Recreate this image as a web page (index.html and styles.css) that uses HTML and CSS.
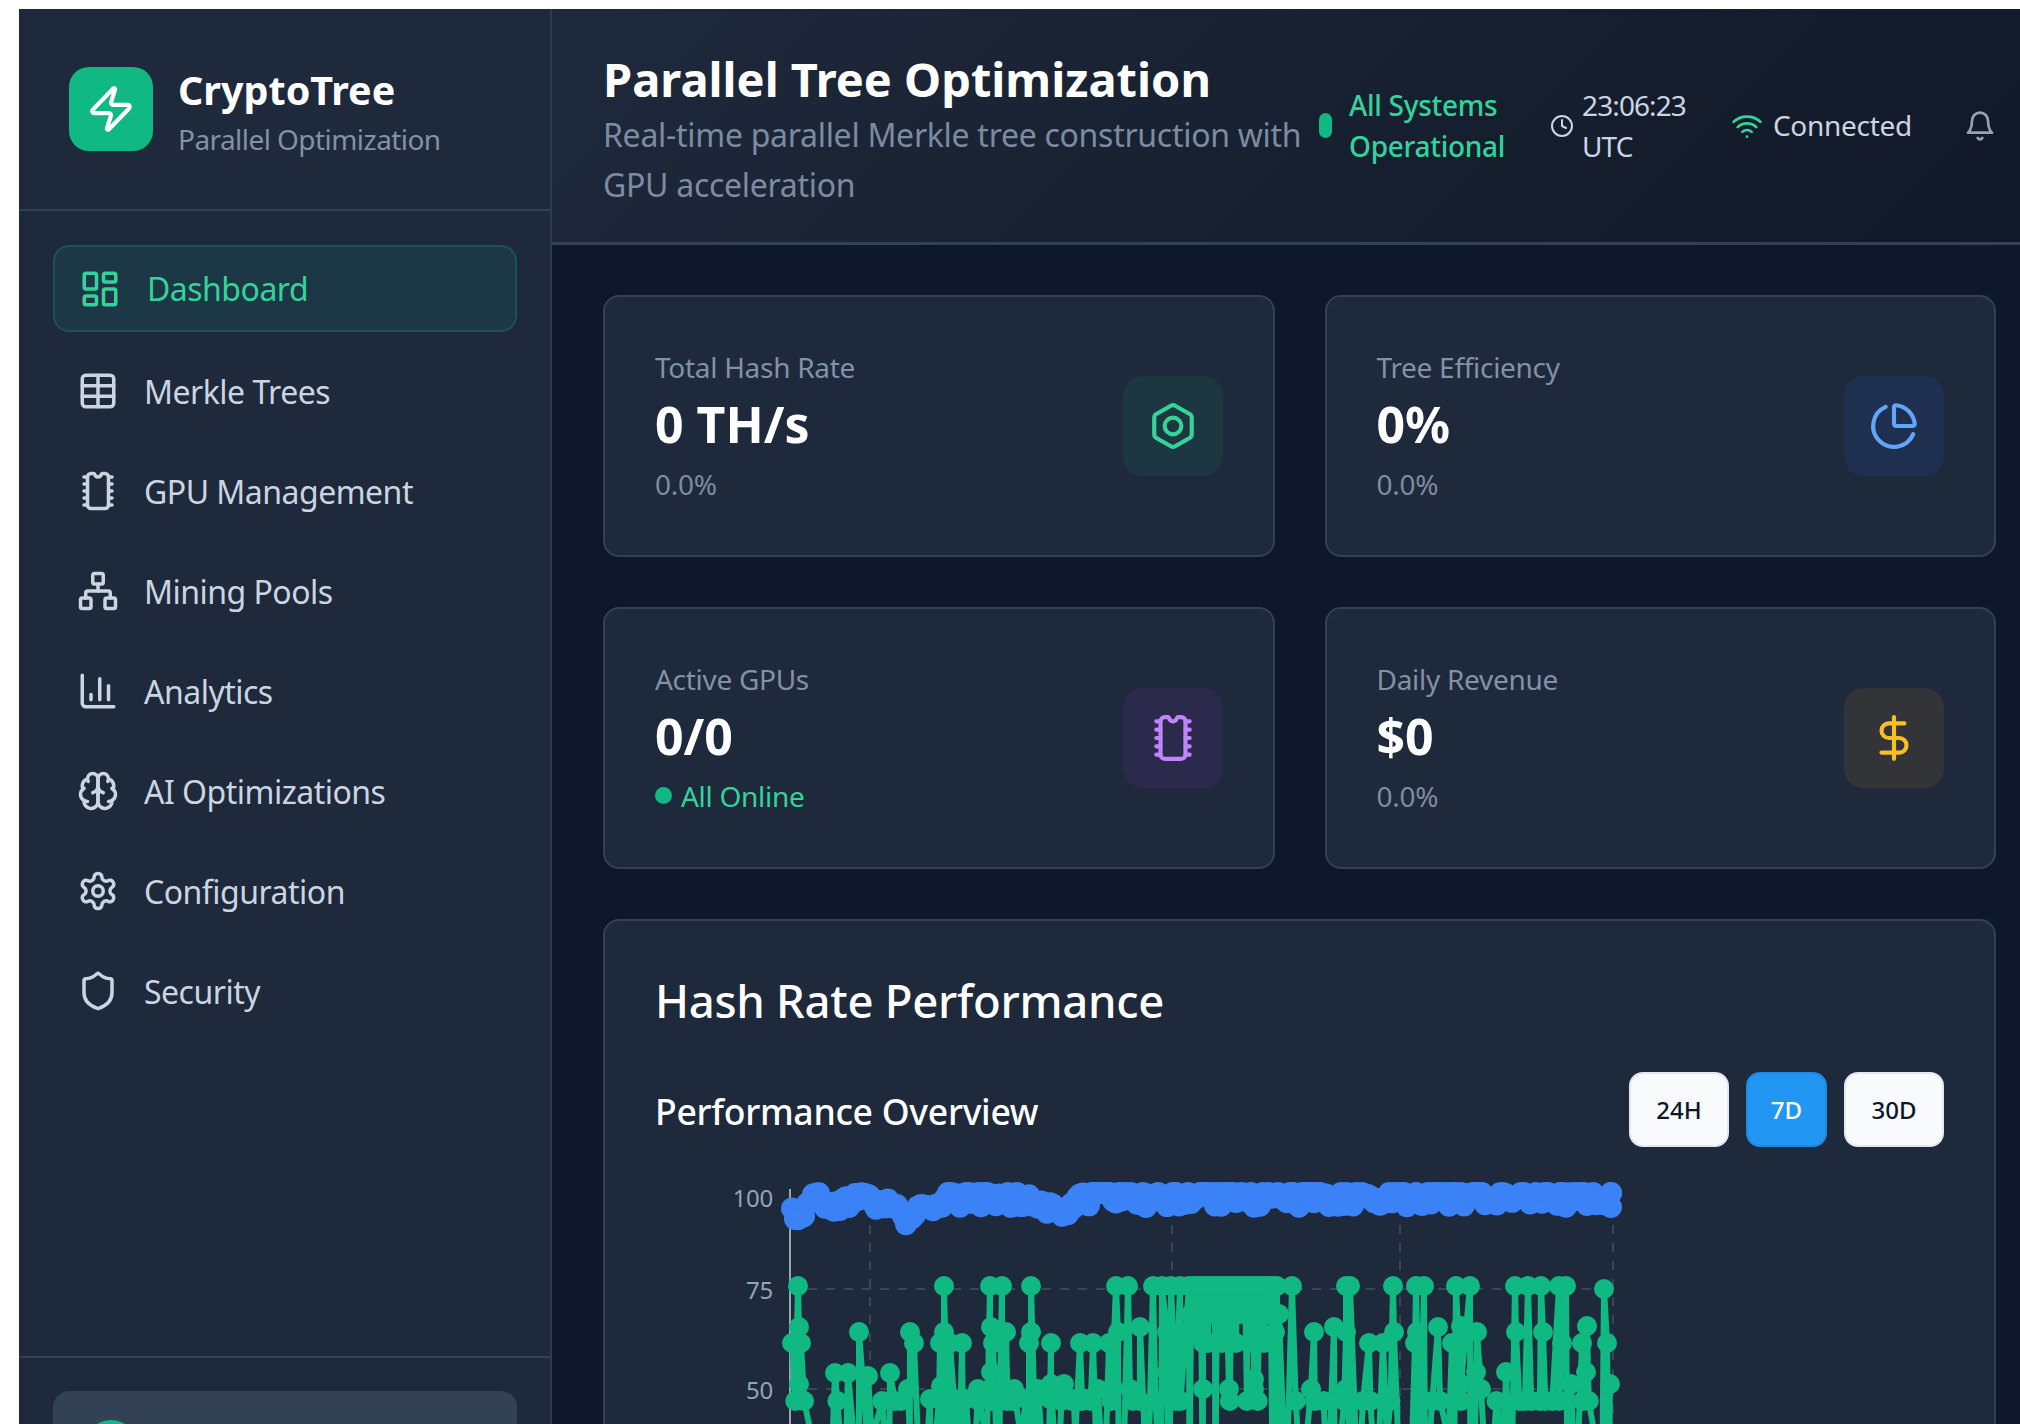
FILE: index.html
```html
<!DOCTYPE html>
<html>
<head>
  <meta charset="utf-8">
  <title>CryptoTree</title>
  <link rel="stylesheet" href="styles.css">
</head>
<body>
  <div class="app">
    <aside class="sidebar">
      <div class="brand">
        <div class="brand-logo">
          <svg class="ico-brand" viewBox="0 0 24 24"><path d="M4 14a1 1 0 0 1-.78-1.63l9.9-10.2a.5.5 0 0 1 .86.46l-1.92 6.02A1 1 0 0 0 13 10h7a1 1 0 0 1 .78 1.63l-9.9 10.2a.5.5 0 0 1-.86-.46l1.92-6.02A1 1 0 0 0 11 14z"/></svg>
        </div>
        <div>
          <div class="brand-name">CryptoTree</div>
          <div class="brand-sub">Parallel Optimization</div>
        </div>
      </div>

      <nav class="nav">
        <a class="nav-item active">
          <svg class="ico" viewBox="0 0 24 24"><rect x="3" y="3" width="7" height="9" rx="1"/><rect x="14" y="3" width="7" height="5" rx="1"/><rect x="14" y="12" width="7" height="9" rx="1"/><rect x="3" y="16" width="7" height="5" rx="1"/></svg>
          Dashboard
        </a>
        <a class="nav-item">
          <svg class="ico" viewBox="0 0 24 24"><path d="M12 3v18"/><rect x="3" y="3" width="18" height="18" rx="2"/><path d="M3 9h18"/><path d="M3 15h18"/></svg>
          Merkle Trees
        </a>
        <a class="nav-item">
          <svg class="ico" viewBox="0 0 24 24"><path d="M18 12h2M18 16h2M18 20h2M18 4h2M18 8h2M4 12h2M4 16h2M4 20h2M4 4h2M4 8h2"/><path d="M8 2a2 2 0 0 0-2 2v16a2 2 0 0 0 2 2h8a2 2 0 0 0 2-2V4a2 2 0 0 0-2-2h-1.5c-.3 0-.5.2-.6.5-.3.9-1 1.5-1.900 1.5s-1.600-.6-1.900-1.500C10 2.200 9.800 2 9.500 2z"/></svg>
          GPU Management
        </a>
        <a class="nav-item">
          <svg class="ico" viewBox="0 0 24 24"><rect x="16" y="16" width="6" height="6" rx="1"/><rect x="2" y="16" width="6" height="6" rx="1"/><rect x="9" y="2" width="6" height="6" rx="1"/><path d="M5 16v-3a1 1 0 0 1 1-1h12a1 1 0 0 1 1 1v3"/><path d="M12 12V8"/></svg>
          Mining Pools
        </a>
        <a class="nav-item">
          <svg class="ico" viewBox="0 0 24 24"><path d="M3 3v16a2 2 0 0 0 2 2h16"/><path d="M18 17V9"/><path d="M13 17V5"/><path d="M8 17v-3"/></svg>
          Analytics
        </a>
        <a class="nav-item">
          <svg class="ico" viewBox="0 0 24 24"><path d="M12 5a3 3 0 1 0-5.997.125 4 4 0 0 0-2.526 5.77 4 4 0 0 0 .556 6.588A4 4 0 1 0 12 18Z"/><path d="M12 5a3 3 0 1 1 5.997.125 4 4 0 0 1 2.526 5.77 4 4 0 0 1-.556 6.588A4 4 0 1 1 12 18Z"/><path d="M15 13a4.5 4.5 0 0 1-3-4 4.5 4.5 0 0 1-3 4"/><path d="M17.599 6.5a3 3 0 0 0 .399-1.375"/><path d="M6.003 5.125A3 3 0 0 0 6.401 6.5"/><path d="M3.477 10.896a4 4 0 0 1 .585-.396"/><path d="M19.938 10.5a4 4 0 0 1 .585.396"/><path d="M6 18a4 4 0 0 1-1.967-.516"/><path d="M19.967 17.484A4 4 0 0 1 18 18"/></svg>
          AI Optimizations
        </a>
        <a class="nav-item">
          <svg class="ico" viewBox="0 0 24 24"><path d="M12.22 2h-.44a2 2 0 0 0-2 2v.18a2 2 0 0 1-1 1.73l-.43.25a2 2 0 0 1-2 0l-.15-.08a2 2 0 0 0-2.73.73l-.22.38a2 2 0 0 0 .73 2.73l.15.1a2 2 0 0 1 1 1.72v.51a2 2 0 0 1-1 1.74l-.15.09a2 2 0 0 0-.73 2.73l.22.38a2 2 0 0 0 2.73.73l.15-.08a2 2 0 0 1 2 0l.43.25a2 2 0 0 1 1 1.73V20a2 2 0 0 0 2 2h.44a2 2 0 0 0 2-2v-.18a2 2 0 0 1 1-1.73l.43-.25a2 2 0 0 1 2 0l.15.08a2 2 0 0 0 2.73-.73l.22-.39a2 2 0 0 0-.73-2.73l-.15-.08a2 2 0 0 1-1-1.74v-.5a2 2 0 0 1 1-1.74l.15-.09a2 2 0 0 0 .73-2.73l-.22-.38a2 2 0 0 0-2.73-.73l-.15.08a2 2 0 0 1-2 0l-.43-.25a2 2 0 0 1-1-1.73V4a2 2 0 0 0-2-2z"/><circle cx="12" cy="12" r="3"/></svg>
          Configuration
        </a>
        <a class="nav-item">
          <svg class="ico" viewBox="0 0 24 24"><path d="M20 13c0 5-3.5 7.5-7.66 8.95a1 1 0 0 1-.67-.01C7.5 20.5 4 18 4 13V6a1 1 0 0 1 1-1c2 0 4.5-1.2 6.24-2.72a1.17 1.17 0 0 1 1.52 0C14.51 3.81 17 5 19 5a1 1 0 0 1 1 1z"/></svg>
          Security
        </a>
      </nav>

      <div class="side-foot">
        <div class="foot-card"><span class="foot-dot"></span></div>
      </div>
    </aside>

    <main class="main">
      <header class="topbar">
        <div class="topbar-title">
          <h1>Parallel Tree Optimization</h1>
          <p>Real-time parallel Merkle tree construction with GPU acceleration</p>
        </div>
        <div class="sys-status">
          <span class="sys-dot"></span>
          <span>All Systems<br>Operational</span>
        </div>
        <div class="clock">
          <svg class="ico-clock" viewBox="0 0 24 24"><circle cx="12" cy="12" r="10"/><path d="M12 6v6l4 2"/></svg>
          <span class="clock-text">23:06:23<br>UTC</span>
        </div>
        <div class="conn">
          <svg class="ico-wifi" viewBox="0 0 24 24"><path d="M12 20h.01"/><path d="M2 8.82a15 15 0 0 1 20 0"/><path d="M5 12.859a10 10 0 0 1 14 0"/><path d="M8.5 16.429a5 5 0 0 1 7 0"/></svg>
          <span>Connected</span>
        </div>
        <svg class="ico-bell" viewBox="0 0 24 24"><path d="M6 8a6 6 0 0 1 12 0c0 7 3 9 3 9H3s3-2 3-9"/><path d="M10.3 21a1.94 1.94 0 0 0 3.4 0"/></svg>
      </header>

      <div class="content">
        <section class="stats">
          <div class="stat">
            <div>
              <div class="stat-label">Total Hash Rate</div>
              <div class="stat-value">0 TH/s</div>
              <div class="stat-sub">0.0%</div>
            </div>
            <div class="stat-icon green">
              <svg class="ico-stat" viewBox="0 0 24 24"><path d="M21 16V8a2 2 0 0 0-1-1.73l-7-4a2 2 0 0 0-2 0l-7 4A2 2 0 0 0 3 8v8a2 2 0 0 0 1 1.73l7 4a2 2 0 0 0 2 0l7-4A2 2 0 0 0 21 16z"/><circle cx="12" cy="12" r="4"/></svg>
            </div>
          </div>
          <div class="stat">
            <div>
              <div class="stat-label">Tree Efficiency</div>
              <div class="stat-value">0%</div>
              <div class="stat-sub">0.0%</div>
            </div>
            <div class="stat-icon blue">
              <svg class="ico-stat" viewBox="0 0 24 24"><path d="M21 12c.552 0 1.005-.449.95-.998a10 10 0 0 0-8.953-8.951c-.55-.055-.998.398-.998.95v8a1 1 0 0 0 1 1z"/><path d="M21.21 15.89A10 10 0 1 1 8 2.83"/></svg>
            </div>
          </div>
          <div class="stat">
            <div>
              <div class="stat-label">Active GPUs</div>
              <div class="stat-value">0/0</div>
              <div class="stat-online"><span class="online-dot"></span>All Online</div>
            </div>
            <div class="stat-icon purple">
              <svg class="ico-stat" viewBox="0 0 24 24"><path d="M18 12h2M18 16h2M18 20h2M18 4h2M18 8h2M4 12h2M4 16h2M4 20h2M4 4h2M4 8h2"/><path d="M8 2a2 2 0 0 0-2 2v16a2 2 0 0 0 2 2h8a2 2 0 0 0 2-2V4a2 2 0 0 0-2-2h-1.5c-.3 0-.5.2-.6.5-.3.9-1 1.5-1.900 1.5s-1.600-.6-1.900-1.500C10 2.200 9.800 2 9.500 2z"/></svg>
            </div>
          </div>
          <div class="stat">
            <div>
              <div class="stat-label">Daily Revenue</div>
              <div class="stat-value">$0</div>
              <div class="stat-sub">0.0%</div>
            </div>
            <div class="stat-icon amber">
              <svg class="ico-stat" viewBox="0 0 24 24"><path d="M12 2v20"/><path d="M17 5H9.5a3.5 3.5 0 0 0 0 7h5a3.5 3.5 0 0 1 0 7H6"/></svg>
            </div>
          </div>
        </section>

        <section class="panel">
          <h2>Hash Rate Performance</h2>
          <div class="panel-head">
            <h3>Performance Overview</h3>
            <div class="ranges">
              <button class="range">24H</button>
              <button class="range on">7D</button>
              <button class="range">30D</button>
            </div>
          </div>
          <svg id="chart" class="chart" viewBox="655 1170 1290 300"></svg>
        </section>
      </div>
    </main>
  </div>
  <script src="chart.js"></script>
</body>
</html>
```

FILE: styles.css
```css
html, body {
  margin: 0;
  height: 1424px;
  overflow: hidden;
  background: #fff;
}

body {
  font-family: "Noto Sans", "Open Sans", sans-serif;
  letter-spacing: -0.018em;
  color: #fff;
  padding: 9px 0 0 19px;
  box-sizing: border-box;
}

svg {
  fill: none;
  stroke: currentColor;
  stroke-width: 2;
  stroke-linecap: round;
  stroke-linejoin: round;
  flex: none;
}

.app {
  display: flex;
  height: 1535px;
}

/* sidebar */
.sidebar {
  width: 533px;
  flex: none;
  box-sizing: border-box;
  background: #1e293b;
  border-right: 2px solid #2d3b4f;
  display: flex;
  flex-direction: column;
}

.brand {
  display: flex;
  align-items: flex-start;
  gap: 25px;
  height: 142px;
  padding: 58px 50px 0;
  border-bottom: 2px solid #334155;
}

.brand-logo {
  width: 84px;
  height: 84px;
  border-radius: 20px;
  background: #10b981;
  color: #fff;
  display: flex;
  align-items: center;
  justify-content: center;
}

.ico-brand { width: 50px; height: 50px; }

.brand-name {
  font-size: 39.5px;
  font-weight: 700;
  line-height: 46px;
  letter-spacing: 0;
}

.brand-sub {
  font-size: 28px;
  line-height: 38px;
  margin-top: 7px;
  letter-spacing: -0.02em;
  color: #8291a7;
}

.nav {
  flex: 1;
  display: flex;
  flex-direction: column;
  gap: 18px;
  padding: 34px 33px 34px 34px;
}

.nav-item {
  display: flex;
  align-items: center;
  gap: 25px;
  height: 82px;
  padding: 0 24px;
  border-radius: 16px;
  font-size: 32px;
  letter-spacing: -0.016em;
  color: #cbd5e1;
}

.nav-item.active {
  height: 87px;
  gap: 26px;
  box-sizing: border-box;
  background: #1c3745;
  border: 2px solid #1d5352;
  color: #34d399;
}

.ico { width: 42px; height: 42px; }

.side-foot {
  border-top: 2px solid #334155;
  padding: 33px 33px 33px 34px;
}

.foot-card {
  height: 120px;
  border-radius: 16px;
  background: #334155;
  padding: 29px 32px;
  box-sizing: border-box;
}

.foot-dot {
  display: block;
  width: 52px;
  height: 52px;
  border-radius: 50%;
  background: #10b981;
}

/* main column */
.main {
  flex: 1;
  min-width: 0;
  background: #0f172a;
}

.topbar {
  display: flex;
  align-items: center;
  gap: 45px;
  height: 236px;
  box-sizing: border-box;
  padding: 0 24px 0 51px;
  background: linear-gradient(135deg, #1e293b 0%, #111827 100%);
  border-bottom: 3px solid #334155;
}

.topbar-title {
  width: 712px;
  margin: 6px -41px 0 0;
  flex: none;
}

.topbar h1 {
  margin: 0;
  font-size: 47px;
  font-weight: 700;
  line-height: 62px;
  letter-spacing: 0;
}

.topbar p {
  margin: 0;
  font-size: 32px;
  line-height: 50px;
  color: #7c8ba1;
}

.sys-status {
  display: flex;
  align-items: center;
  gap: 17px;
  font-size: 28px;
  line-height: 41px;
  font-weight: 500;
  color: #34d399;
}

.sys-dot {
  width: 13px;
  height: 25px;
  border-radius: 7px;
  background: #10b981;
  flex: none;
}

.clock, .conn {
  display: flex;
  align-items: center;
  gap: 8px;
  font-size: 28px;
  line-height: 41px;
  color: #cbd5e1;
}

.clock-text { letter-spacing: -0.9px; }

.conn { gap: 10px; }

.ico-clock { width: 24px; height: 24px; }
.ico-wifi { width: 32px; height: 32px; color: #34d399; }
.ico-bell { width: 32px; height: 32px; color: #94a3b8; margin-left: auto; }

.content {
  padding: 50px 24px 0 51px;
}

.stats {
  display: grid;
  grid-template-columns: 1fr 1fr;
  gap: 50px;
}

.stat, .panel {
  background: #1e293b;
  border: 2px solid #334155;
  border-radius: 16px;
}

.stat {
  height: 262px;
  box-sizing: border-box;
  padding: 0 50px;
  display: flex;
  align-items: center;
  justify-content: space-between;
}

.stat-label {
  font-size: 28px;
  line-height: 42px;
  color: #8291a7;
}

.stat-value {
  font-size: 50px;
  font-weight: 700;
  line-height: 62px;
  letter-spacing: 0;
  margin: 5px 0 6px;
}

.stat-sub {
  font-size: 28px;
  line-height: 46px;
  color: #7c8ba1;
}

.stat-online {
  display: flex;
  align-items: center;
  gap: 9px;
  font-size: 28px;
  line-height: 46px;
  color: #34d399;
}

.online-dot {
  width: 17px;
  height: 17px;
  border-radius: 50%;
  background: #10b981;
}

.stat-icon {
  width: 100px;
  height: 100px;
  border-radius: 20px;
  display: flex;
  align-items: center;
  justify-content: center;
}

.stat-icon.green { background: #1c3741; color: #34d399; }
.stat-icon.blue { background: #1e2f50; color: #60a5fa; }
.stat-icon.purple { background: #2b2a4c; color: #c084fc; }
.stat-icon.amber { background: #333437; color: #fbbf24; }

.ico-stat { width: 50px; height: 50px; }

.panel {
  margin-top: 50px;
  padding: 45px 50px 40px;
}

.panel h2 {
  margin: 0;
  font-size: 45.5px;
  font-weight: 500;
  line-height: 68px;
}

.panel-head {
  display: flex;
  align-items: center;
  justify-content: space-between;
  margin-top: 38px;
}

.panel h3 {
  margin: 0;
  padding-top: 2px;
  font-size: 35.6px;
  font-weight: 500;
}

.ranges {
  display: flex;
  gap: 17px;
}

.range {
  width: 100px;
  height: 75px;
  padding: 0;
  border: 2px solid #e2e8f0;
  border-radius: 14px;
  background: #f8fafc;
  font: 500 24px "Noto Sans", sans-serif;
  color: #0f172a;
}

.range.on {
  width: 81px;
  background: #2196f3;
  border-color: #1e88e5;
  color: #fff;
}

.chart {
  display: block;
  width: 1290px;
  height: 300px;
  margin-top: 22px;
  stroke-linecap: butt;
}

.chart text {
  font-size: 24px;
  fill: #94a3b8;
  stroke: none;
  text-anchor: end;
}

.grid-line {
  stroke: #3a4657;
  stroke-dasharray: 9 9;
}

.axis-line { stroke: #9ca3af; }
```

FILE: chart.js
```js
// seeded so the picture comes out the same each time
var seed = 4711;
function rnd() {
  seed = (seed * 16807) % 2147483647;
  return seed / 2147483647;
}

var svg = document.getElementById("chart");
var NS = "http://www.w3.org/2000/svg";

function add(name, attrs, parent) {
  var el = document.createElementNS(NS, name);
  for (var k in attrs) el.setAttribute(k, attrs[k]);
  (parent || svg).appendChild(el);
  return el;
}

function drawSeries(points, color, r, width) {
  var g = add("g", {});
  add("polyline", {
    points: points.map(function (p) { return p.join(","); }).join(" "),
    stroke: color, "stroke-width": width, "stroke-linejoin": "round"
  }, g);
  points.forEach(function (p) {
    add("circle", { cx: p[0], cy: p[1], r: r, fill: color, stroke: "none" }, g);
  });
}

// grid
[1290, 1390].forEach(function (y) {
  add("line", { x1: 790, x2: 1613, y1: y, y2: y, "class": "grid-line" });
});
[870, 1172, 1400, 1613].forEach(function (x) {
  add("line", { x1: x, x2: x, y1: 1190, y2: 1470, "class": "grid-line" });
});
add("line", { x1: 790, x2: 790, y1: 1190, y2: 1470, "class": "axis-line" });

[["100", 1208], ["75", 1300], ["50", 1400]].forEach(function (t) {
  add("text", { x: 773, y: t[1] }).textContent = t[0];
});

// hash rate, sits against the top of the scale
var dips = [[797, 20], [838, 8], [905, 22], [925, 12], [880, 8], [1064, 18], [1045, 10]];
var blue = [];
for (var x = 792; x <= 1611; x += 3) {
  var y = 1194 + Math.max(0, rnd() * 22 - 8);
  dips.forEach(function (d) {
    var u = (x - d[0]) / 10;
    y += d[1] * Math.exp(-u * u);
  });
  blue.push([x, y]);
}
blue.push([1611, 1194], [1611, 1208]);
drawSeries(blue, "#3b82f6", 11, 6);

// tree efficiency, the dots read off the run this screenshot was taken from
var dots = [
  [792,1344],[801,1344],[799,1328],[799,1385],[835,1374],[848,1374],[859,1333],[868,1377],[890,1374],
  [910,1333],[914,1344],[908,1390],[941,1387],[939,1400],[944,1333],[940,1344],[962,1344],[950,1344],
  [991,1328],[993,1344],[1006,1333],[991,1373],[1031,1333],[1029,1344],[1051,1344],[1051,1385],[1064,1385],
  [1080,1344],[1093,1344],[1109,1344],[1140,1328],[1118,1333],[1167,1333],[1167,1373],[1130,1390],
  [1196,1333],[1203,1344],[1203,1390],[1229,1390],[1254,1380],[1254,1390],
  [1208,1344],[1222,1344],[1236,1344],[1250,1344],[1264,1344],[1275,1333],
  [1334,1328],[1314,1333],[1346,1333],[1369,1344],[1394,1333],[1383,1344],[1417,1333],[1438,1328],[1415,1344],
  [1452,1344],[1461,1327],[1477,1333],[1476,1373],[1481,1390],[1506,1373],[1516,1333],[1543,1333],[1562,1344],
  [1587,1327],[1582,1344],[1607,1344],[1610,1385],[1586,1373],[1571,1385],[1346,1390],[1461,1385],[1311,1390],
  [1604,1290]
];
[798, 944, 990, 1002, 1031, 1116, 1128, 1292, 1346, 1350, 1393, 1416, 1424, 1456, 1470, 1515, 1528, 1541, 1559, 1566].forEach(function (x) {
  dots.push([x, 1287]);
});
for (var a = 1153; a < 1189; a += 9) dots.push([a, 1287]);
// the run that stays at the top of the scale
for (var b = 1189; b <= 1278; b += 4) {
  dots.push([b, 1287]);
  dots.push([b + 2, 1315]);
}
for (var c = 930; c <= 1113; c += 12) dots.push([c, rnd() < 0.5 ? 1390 : 1400]);
for (var f = 795; f <= 1610; f += 7) {
  if (f > 1192 && f < 1278 && (f - 795) % 14 != 0) continue;
  var low = [1402, 1402, 1440, 1500, 1500][Math.floor(rnd() * 5)];
  dots.push([f + rnd() * 4, low]);
}
dots.sort(function (p, q) { return p[0] - q[0]; });
drawSeries(dots, "#10b981", 10, 6);
```
